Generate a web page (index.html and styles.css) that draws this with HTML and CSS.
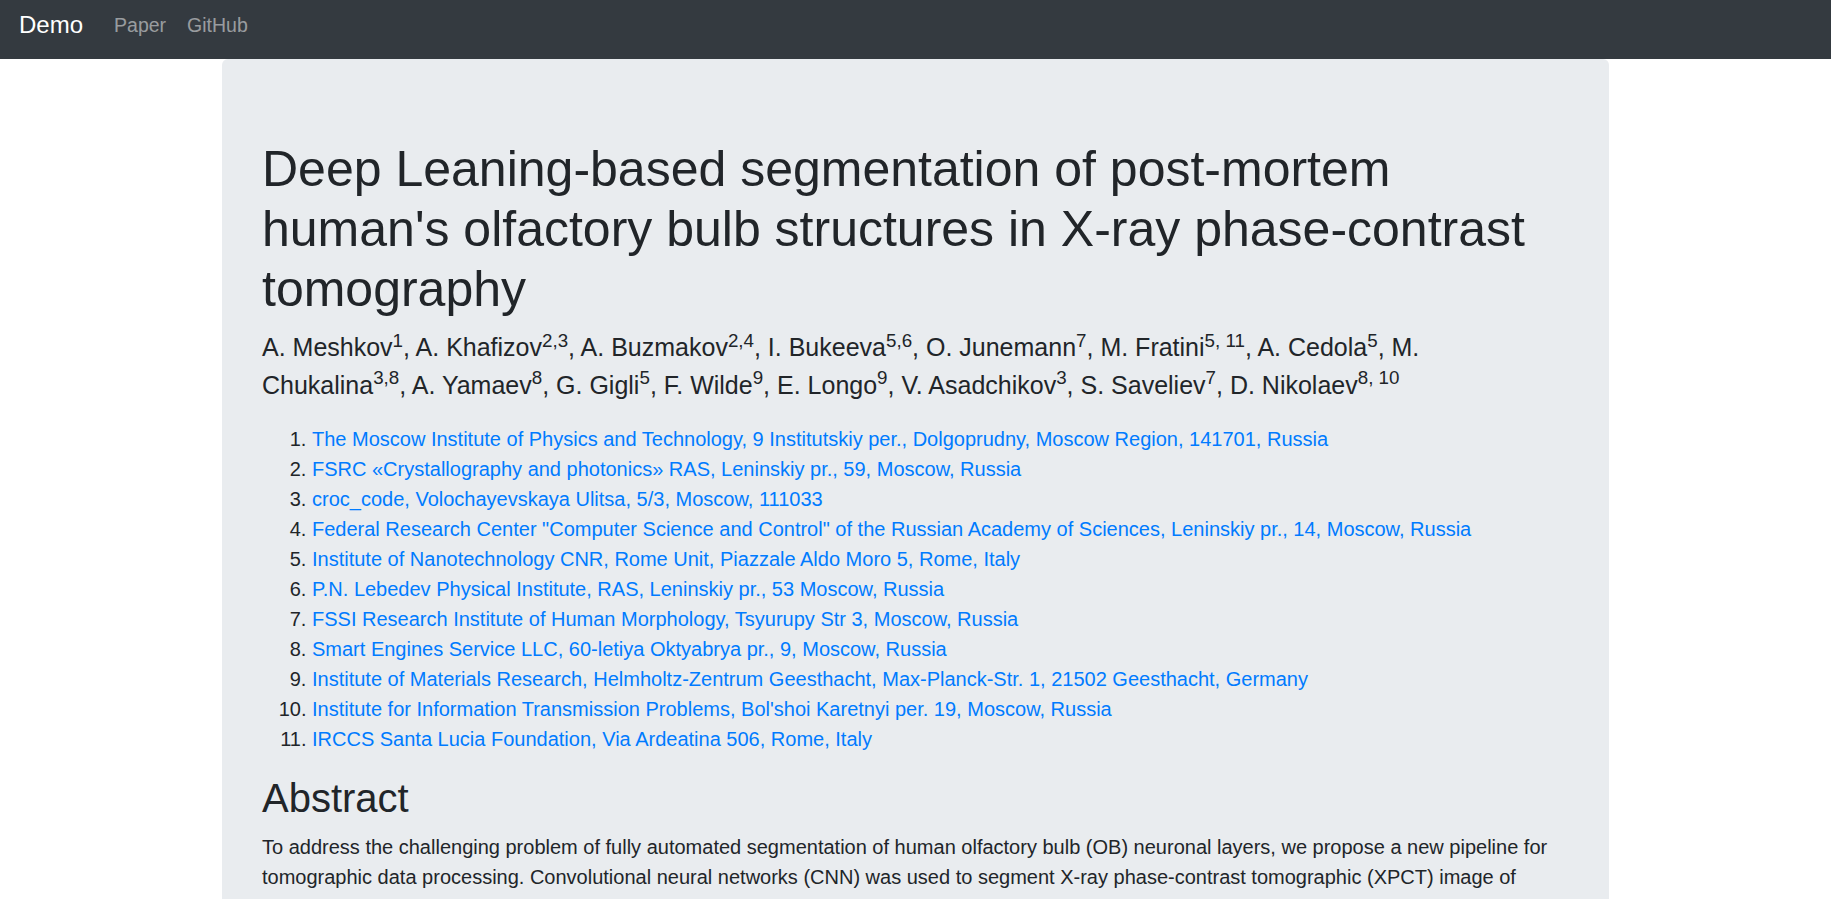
FILE: index.html
```html
<!DOCTYPE html>
<html lang="en">
<head>
  <meta charset="UTF-8">
  <meta name="viewport" content="width=device-width, initial-scale=1.0">
  <title>Demo</title>
  <link rel="stylesheet" href="styles.css">
</head>
<body>
  <nav class="navbar">
    <a class="navbar-brand" href="#">Demo</a>
    <a class="nav-link" href="#paper">Paper</a>
    <a class="nav-link" href="#github">GitHub</a>
  </nav>

  <main class="container">
    <div class="jumbotron">
      <h1>Deep Leaning-based segmentation of post-mortem human's olfactory bulb structures in X-ray phase-contrast tomography</h1>
      <p class="lead">A. Meshkov<sup>1</sup>, A. Khafizov<sup>2,3</sup>, A. Buzmakov<sup>2,4</sup>, I. Bukeeva<sup>5,6</sup>, O. Junemann<sup>7</sup>, M. Fratini<sup>5, 11</sup>, A. Cedola<sup>5</sup>, M. Chukalina<sup>3,8</sup>, A. Yamaev<sup>8</sup>, G. Gigli<sup>5</sup>, F. Wilde<sup>9</sup>, E. Longo<sup>9</sup>, V. Asadchikov<sup>3</sup>, S. Saveliev<sup>7</sup>, D. Nikolaev<sup>8, 10</sup></p>

      <ol class="affiliations">
        <li><a href="#">The Moscow Institute of Physics and Technology, 9 Institutskiy per., Dolgoprudny, Moscow Region, 141701, Russia</a></li>
        <li><a href="#">FSRC «Crystallography and photonics» RAS, Leninskiy pr., 59, Moscow, Russia</a></li>
        <li><a href="#">croc_code, Volochayevskaya Ulitsa, 5/3, Moscow, 111033</a></li>
        <li><a href="#">Federal Research Center "Computer Science and Control" of the Russian Academy of Sciences, Leninskiy pr., 14, Moscow, Russia</a></li>
        <li><a href="#">Institute of Nanotechnology CNR, Rome Unit, Piazzale Aldo Moro 5, Rome, Italy</a></li>
        <li><a href="#">P.N. Lebedev Physical Institute, RAS, Leninskiy pr., 53 Moscow, Russia</a></li>
        <li><a href="#">FSSI Research Institute of Human Morphology, Tsyurupy Str 3, Moscow, Russia</a></li>
        <li><a href="#">Smart Engines Service LLC, 60-letiya Oktyabrya pr., 9, Moscow, Russia</a></li>
        <li><a href="#">Institute of Materials Research, Helmholtz-Zentrum Geesthacht, Max-Planck-Str. 1, 21502 Geesthacht, Germany</a></li>
        <li><a href="#">Institute for Information Transmission Problems, Bol'shoi Karetnyi per. 19, Moscow, Russia</a></li>
        <li><a href="#">IRCCS Santa Lucia Foundation, Via Ardeatina 506, Rome, Italy</a></li>
      </ol>

      <h2>Abstract</h2>
      <p>To address the challenging problem of fully automated segmentation of human olfactory bulb (OB) neuronal layers, we propose a new pipeline for tomographic data processing. Convolutional neural networks (CNN) was used to segment X-ray phase-contrast tomographic (XPCT) image of native unstained human OB. Virtual segmentation of the whole OB and an accurate delineation of each layer in a healthy non-demented OB is mandatory as the first step for assessing OB morphological changes in smell impairment research. In this framework, we proposed an effective tool that could help to explore the gradual changes in OB morphology from healthy to pathological conditions.</p>

      <h2 id="paper">Paper</h2>
      <p>The full text of the paper describes the acquisition of the tomographic data, the annotation procedure and the training of the segmentation networks. The resulting masks of the olfactory bulb layers are compared with manual expert segmentation.</p>

      <h2>Demo</h2>
      <p>Upload a slice of a tomographic reconstruction to get the predicted segmentation of the olfactory bulb structures. The processing is done on the server and takes a few seconds for a single image.</p>

      <h2 id="github">Code</h2>
      <p>The source code of the pipeline, the pretrained models and the instructions for running the demo locally are available in the GitHub repository.</p>
    </div>
  </main>
</body>
</html>
```

FILE: styles.css
```css
html {
  font-size: 20px;
}
body {
  margin: 0;
  /* room the reference keeps for its scrollbar */
  padding-right: 15px;
  font-family: "Liberation Sans", Arial, sans-serif;
  font-size: 1rem;
  line-height: 1.5;
  color: #212529;
  background-color: #fff;
}
a {
  color: #007bff;
  text-decoration: none;
}
.navbar {
  display: flex;
  align-items: flex-start;
  height: 59px;
  box-sizing: border-box;
  padding: 7px 19px 0;
  background-color: #343a40;
}
.navbar-brand {
  color: #fff;
  font-size: 24px;
  line-height: 36px;
  margin-right: 31px;
}
.nav-link {
  color: rgba(255, 255, 255, 0.5);
  font-size: 19.5px;
  line-height: 30px;
  padding-top: 3px;
  margin-right: 21px;
}
.container {
  max-width: 1387px;
  margin: 0 auto;
}
.jumbotron {
  background-color: #e9ecef;
  border-radius: 6px;
  padding: 80px 40px;
  margin-bottom: 40px;
}
h1 {
  margin: 0 0 10px;
  font-size: 50px;
  font-weight: 500;
  line-height: 1.2;
}
h2 {
  margin: 0 0 10px;
  font-size: 40px;
  font-weight: 500;
  line-height: 1.2;
}
p {
  margin: 0 0 20px;
}
.lead {
  font-size: 25px;
  font-weight: 300;
}
sup {
  position: relative;
  top: -0.5em;
  font-size: 75%;
  line-height: 0;
  vertical-align: baseline;
}
.affiliations {
  margin: 0 0 20px;
  padding-left: 50px;
}
```
